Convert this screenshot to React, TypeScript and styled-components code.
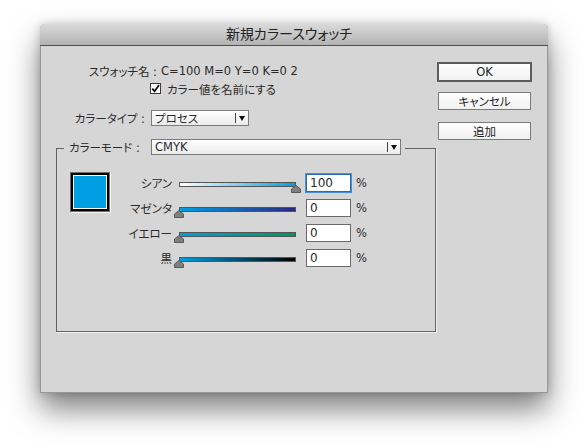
import React from "react";
import styled, { createGlobalStyle } from "styled-components";

const GlobalStyle = createGlobalStyle`
  html, body {
    margin: 0;
    padding: 0;
    background: #ffffff;
  }
  body {
    font-family: "DejaVu Sans", "Noto Sans CJK JP", sans-serif;
    color: #2a2a2a;
    font-feature-settings: "palt";
  }
`;

const Page = styled.div`
  width: 587px;
  height: 448px;
  padding: 24px 0 0 40px;
  box-sizing: border-box;
  overflow: hidden;
`;

const Window = styled.div`
  width: 508px;
  height: 369px;
  box-sizing: border-box;
  background: #d6d6d6;
  border: 1px solid #979797;
  border-top: none;
  border-radius: 5px 5px 0 0;
  box-shadow: 0 16px 30px rgba(0, 0, 0, 0.5), 0 0 8px rgba(0, 0, 0, 0.18);
  display: flex;
  flex-direction: column;
`;

const TitleBar = styled.div`
  height: 21px;
  border-bottom: 1px solid #505050;
  border-radius: 5px 5px 0 0;
  background: linear-gradient(#dadada, #b3b3b3);
  text-align: center;
  font-size: 14px;
  line-height: 21px;
  color: #222;
  margin: 0 -1px;
  padding-right: 10px;
`;

const Body = styled.div`
  flex: 1;
  display: flex;
`;

const MainColumn = styled.div`
  width: 396px;
  display: flex;
  flex-direction: column;
`;

const NameRow = styled.div`
  margin-top: 17px;
  height: 16px;
  display: flex;
  align-items: center;
  font-size: 11.5px;
`;

const RightLabel = styled.span<{ $width: number; $left?: boolean }>`
  width: ${(p) => p.$width}px;
  text-align: ${(p) => (p.$left ? "left" : "right")};
  white-space: nowrap;
  font-size: 11.5px;
  flex-shrink: 0;
`;

const Value = styled.span`
  margin-left: 4px;
  white-space: nowrap;
  font-size: 11.5px;
`;

const CheckRow = styled.label`
  margin-top: 2px;
  height: 15px;
  padding-left: 109px;
  display: flex;
  align-items: center;
  gap: 6px;
  font-size: 11.5px;
`;

const CheckBox = styled.span`
  width: 11px;
  height: 11px;
  box-sizing: border-box;
  border: 1px solid #3a3a3a;
  background: #fff;
  display: flex;
  align-items: center;
  justify-content: center;
`;

const TypeRow = styled.div`
  margin-top: 14px;
  height: 16px;
  display: flex;
  align-items: center;
  gap: 6px;
`;

const Select = styled.div<{ $width: number }>`
  width: ${(p) => p.$width}px;
  height: 16px;
  box-sizing: border-box;
  border: 1px solid #7b7b7b;
  background: linear-gradient(#ffffff, #ebebeb);
  display: flex;
  align-items: center;
  font-size: 11.5px;
  flex-shrink: 0;
`;

const SelectText = styled.span`
  flex: 1;
  padding-left: 3px;
  white-space: nowrap;
`;

const SelectArrow = styled.span`
  width: 12px;
  height: 10px;
  border-left: 1px solid #444;
  display: flex;
  align-items: center;
  justify-content: center;
  &::after {
    content: "";
    border-left: 3.5px solid transparent;
    border-right: 3.5px solid transparent;
    border-top: 5px solid #111;
  }
`;

const Group = styled.div`
  margin: 22px 0 0 15px;
  width: 380px;
  height: 184px;
  box-sizing: border-box;
  border: 1px solid #626262;
  box-shadow: 1px 1px 0 #f2f2f2;
`;

const GroupHeader = styled.div`
  margin: -10px 0 0 7px;
  padding: 0 4px 0 5px;
  width: fit-content;
  background: #d6d6d6;
  display: flex;
  align-items: center;
  height: 16px;
`;

const GroupContent = styled.div`
  display: flex;
  padding: 15px 0 0 13px;
`;

const Swatch = styled.div<{ $color: string }>`
  margin-top: 2px;
  width: 40px;
  height: 40px;
  box-sizing: border-box;
  border: 1px solid #6e6e6e;
  padding: 2px;
  background: #000;
  box-shadow: 1px 1px 0 #f4f4f4;
  &::after {
    content: "";
    display: block;
    width: 100%;
    height: 100%;
    box-sizing: border-box;
    border: 1px solid #fff;
    background: ${(p) => p.$color};
  }
`;

const Sliders = styled.div`
  display: flex;
  flex-direction: column;
`;

const SliderRow = styled.div`
  height: 25px;
  display: flex;
  align-items: center;
  font-size: 11.5px;
`;

const SliderLabel = styled.span`
  width: 62px;
  text-align: right;
  white-space: nowrap;
  padding-top: 1px;
`;

const TrackCell = styled.div`
  margin-left: 7px;
  width: 117px;
  height: 25px;
  padding-top: 12px;
  box-sizing: border-box;
  position: relative;
`;

const Track = styled.div<{ $from: string; $to: string }>`
  width: 117px;
  height: 5px;
  box-sizing: border-box;
  border: 1px solid #555;
  background: linear-gradient(to right, ${(p) => p.$from}, ${(p) => p.$to});
`;

const Thumb = styled.svg`
  position: absolute;
  top: 15px;
  margin-left: -5px;
`;

const NumberBox = styled.div<{ $focused?: boolean }>`
  margin-left: 10px;
  width: 45px;
  height: 18px;
  box-sizing: border-box;
  border: 1px solid ${(p) => (p.$focused ? "#2c6cb0" : "#6a6a6a")};
  box-shadow: ${(p) => (p.$focused ? "0 0 0 1px #4a8fd6" : "none")};
  background: #fff;
  font-size: 12px;
  line-height: 16px;
  padding-left: 3px;
`;

const Percent = styled.span`
  margin-left: 5px;
  font-size: 11.5px;
`;

const ButtonColumn = styled.div`
  display: flex;
  flex-direction: column;
  align-items: center;
  width: 95px;
  padding-top: 16px;
`;

const Button = styled.div<{ $primary?: boolean; $gap: number }>`
  margin-top: ${(p) => p.$gap}px;
  width: ${(p) => (p.$primary ? 95 : 93)}px;
  height: ${(p) => (p.$primary ? 20 : 18)}px;
  box-sizing: border-box;
  border: ${(p) => (p.$primary ? "2px solid #5c5c5c" : "1px solid #7a7a7a")};
  background: linear-gradient(#ffffff, #f1f1f1);
  display: flex;
  align-items: center;
  justify-content: center;
  font-size: 11.5px;
  color: #222;
`;

type Channel = {
  name: string;
  value: number;
  from: string;
  to: string;
};

const channels: Channel[] = [
  { name: "シアン", value: 100, from: "#ffffff", to: "#009fe3" },
  { name: "マゼンタ", value: 0, from: "#009fe3", to: "#2b2783" },
  { name: "イエロー", value: 0, from: "#009fe3", to: "#00965a" },
  { name: "黒", value: 0, from: "#009fe3", to: "#000000" },
];

const App = () => {
  return (
    <Page>
      <GlobalStyle />
      <Window>
        <TitleBar>新規カラースウォッチ</TitleBar>
        <Body>
          <MainColumn>
            <NameRow>
              <RightLabel $width={116}>スウォッチ名 :</RightLabel>
              <Value>C=100 M=0 Y=0 K=0 2</Value>
            </NameRow>
            <CheckRow>
              <CheckBox>
                <svg width="9" height="9" viewBox="0 0 9 9">
                  <path d="M1.2 4.6 L3.6 7.2 L8 1" fill="none" stroke="#111" strokeWidth="1.8" />
                </svg>
              </CheckBox>
              カラー値を名前にする
            </CheckRow>
            <TypeRow>
              <RightLabel $width={104}>カラータイプ :</RightLabel>
              <Select $width={98}>
                <SelectText>プロセス</SelectText>
                <SelectArrow />
              </Select>
            </TypeRow>
            <Group>
              <GroupHeader>
                <RightLabel $width={82} $left>
                  カラーモード :
                </RightLabel>
                <Select $width={250}>
                  <SelectText>CMYK</SelectText>
                  <SelectArrow />
                </Select>
              </GroupHeader>
              <GroupContent>
                <Swatch $color="#009fe3" />
                <Sliders>
                  {channels.map((c, i) => (
                    <SliderRow key={c.name}>
                      <SliderLabel>{c.name}</SliderLabel>
                      <TrackCell>
                        <Track $from={c.from} $to={c.to} />
                        <Thumb
                          width="10"
                          height="8"
                          viewBox="0 0 10 8"
                          style={{ left: `${(c.value / 100) * 117}px` }}
                        >
                          <path d="M5 0.5 L9.5 4 L9.5 7.5 L0.5 7.5 L0.5 4 Z" fill="#7f7f7f" stroke="#5a5a5a" />
                        </Thumb>
                      </TrackCell>
                      <NumberBox $focused={i === 0}>{c.value}</NumberBox>
                      <Percent>%</Percent>
                    </SliderRow>
                  ))}
                </Sliders>
              </GroupContent>
            </Group>
          </MainColumn>
          <ButtonColumn>
            <Button $primary $gap={0}>OK</Button>
            <Button $gap={10}>キャンセル</Button>
            <Button $gap={12}>追加</Button>
          </ButtonColumn>
        </Body>
      </Window>
    </Page>
  );
};

export default App;
